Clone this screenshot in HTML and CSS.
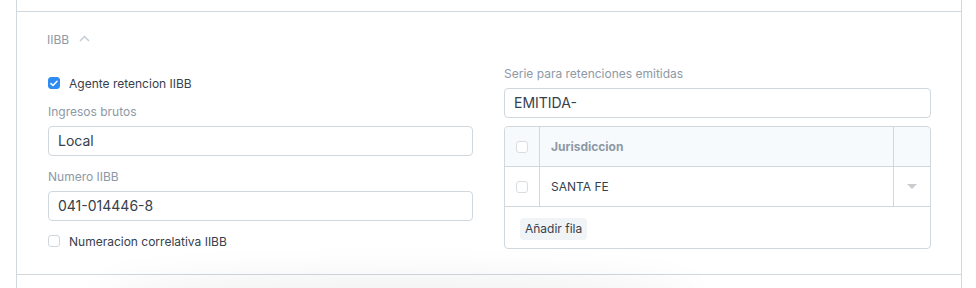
FILE: index.html
```html
<!DOCTYPE html>
<html>
<head>
<meta charset="utf-8">
<link rel="stylesheet" href="styles.css">
</head>
<body>
<div class="page">
  <div class="prev-section"></div>
  <div class="section">
    <div class="section-head">
      <span class="section-title">IIBB</span>
      <svg class="chev" width="11" height="7" viewBox="0 0 11 7"><path d="M1 6 L5.5 1.5 L10 6" fill="none" stroke="#c5ccd3" stroke-width="1.5"/></svg>
    </div>
    <div class="cols">
      <div class="col">
        <label class="check-row first">
          <span class="cb checked"><svg width="8" height="7" viewBox="0 0 8 7"><path d="M1 3.6 L3 5.5 L7 1.3" fill="none" stroke="#fff" stroke-width="1.5" stroke-linecap="round" stroke-linejoin="round"/></svg></span>
          <span class="check-label">Agente retencion IIBB</span>
        </label>
        <div class="field">
          <div class="field-label">Ingresos brutos</div>
          <div class="input">Local</div>
        </div>
        <div class="field">
          <div class="field-label">Numero IIBB</div>
          <div class="input">041-014446-8</div>
        </div>
        <label class="check-row last">
          <span class="cb"></span>
          <span class="check-label">Numeracion correlativa IIBB</span>
        </label>
      </div>
      <div class="col">
        <div class="field top">
          <div class="field-label">Serie para retenciones emitidas</div>
          <div class="input">EMITIDA-</div>
        </div>
        <div class="grid">
          <div class="grid-row head">
            <div class="c-check"><span class="cb light"></span></div>
            <div class="c-main">Jurisdiccion</div>
            <div class="c-edit"></div>
          </div>
          <div class="grid-row">
            <div class="c-check"><span class="cb light"></span></div>
            <div class="c-main data">SANTA FE</div>
            <div class="c-edit"><span class="caret"></span></div>
          </div>
          <div class="grid-foot">
            <span class="btn">Añadir fila</span>
          </div>
        </div>
      </div>
    </div>
  </div>
  <div class="next-section"></div>
  <div class="shadow"></div>
</div>
</body>
</html>
```

FILE: styles.css
```css
html, body {
  margin: 0;
  padding: 0;
  background: #fff;
}
body {
  font-family: Inter, "Liberation Sans", Arial, sans-serif;
  color: #36414c;
  -webkit-font-smoothing: antialiased;
}
.page {
  position: relative;
  margin-left: 16px;
  width: 944px;
  height: 288px;
  border-left: 1px solid #d1d8dd;
  border-right: 1px solid #d1d8dd;
  overflow: hidden;
}
.prev-section {
  height: 11px;
}
.section {
  border-top: 1px solid #d1d8dd;
  height: 263px;
  box-sizing: border-box;
  padding: 20px 30px 0 30px;
}
.section-head {
  display: flex;
  align-items: center;
  height: 14px;
  gap: 10px;
}
.section-title {
  font-size: 12px;
  font-weight: 400;
  color: #8d99a6;
}
.chev {
  margin-top: -1px;
}
.cols {
  display: grid;
  grid-template-columns: 427px 427px;
  gap: 30px;
  margin-top: 22px;
}
.col {
  display: flex;
  flex-direction: column;
}
.check-row {
  display: flex;
  align-items: center;
  gap: 9px;
  height: 14px;
  padding-left: 1px;
}
.check-row.first {
  margin-top: 8px;
}
.check-row.last {
  margin-top: 13px;
}
.cb {
  width: 10px;
  height: 10px;
  border: 1px solid #d1d8dd;
  border-radius: 3px;
  background: #fff;
  display: inline-flex;
  align-items: center;
  justify-content: center;
  flex: none;
}
.cb.checked {
  background: #2f8cf0;
  border-color: #2f8cf0;
}
.cb.light {
  border-color: #d8dde2;
}
.check-label {
  font-size: 12px;
  color: #36414c;
}
.field {
  display: flex;
  flex-direction: column;
  padding-left: 1px;
}
.field-label {
  font-size: 12px;
  color: #8d99a6;
  height: 14px;
  line-height: 14px;
  margin-bottom: 7px;
}
.check-row.first + .field {
  margin-top: 15px;
}
.field + .field {
  margin-top: 14px;
}
.field.top {
  margin-top: -1px;
  padding-left: 0;
}
.input {
  height: 28px;
  border: 1px solid #d1d8dd;
  border-radius: 4px;
  padding: 0 9px;
  font-size: 14px;
  line-height: 28px;
  color: #36414c;
}
.col:first-child .input {
  margin-right: 1px;
}
.grid {
  margin-top: 8px;
  border: 1px solid #d1d8dd;
  border-radius: 4px;
}
.grid-row {
  display: flex;
  height: 39px;
  border-bottom: 1px solid #d1d8dd;
}
.grid-row.head {
  background: #f7fafc;
  border-radius: 4px 4px 0 0;
}
.c-check {
  width: 34px;
  border-right: 1px solid #d1d8dd;
  display: flex;
  align-items: center;
  justify-content: center;
}
.c-main {
  flex: 1;
  padding-left: 11px;
  display: flex;
  align-items: center;
  font-size: 12px;
}
.head .c-main {
  font-weight: 700;
  color: #8d99a6;
}
.c-main.data {
  color: #36414c;
}
.c-edit {
  width: 36px;
  border-left: 1px solid #d1d8dd;
  display: flex;
  align-items: center;
  justify-content: center;
}
.caret {
  width: 0;
  height: 0;
  border-left: 5px solid transparent;
  border-right: 5px solid transparent;
  border-top: 5px solid #c8ccd0;
}
.grid-foot {
  padding: 10px 15px 9px;
  height: 22px;
}
.btn {
  display: inline-block;
  background: #f0f4f7;
  border-radius: 4px;
  padding: 0 5px;
  height: 22px;
  line-height: 22px;
  font-size: 12px;
  color: #36414c;
}
.next-section {
  border-top: 1px solid #d1d8dd;
}
.shadow {
  position: absolute;
  left: 80px;
  top: 290px;
  width: 600px;
  height: 40px;
  border-radius: 50%;
  box-shadow: 0 -10px 40px rgba(0, 0, 0, 0.07);
}
```
